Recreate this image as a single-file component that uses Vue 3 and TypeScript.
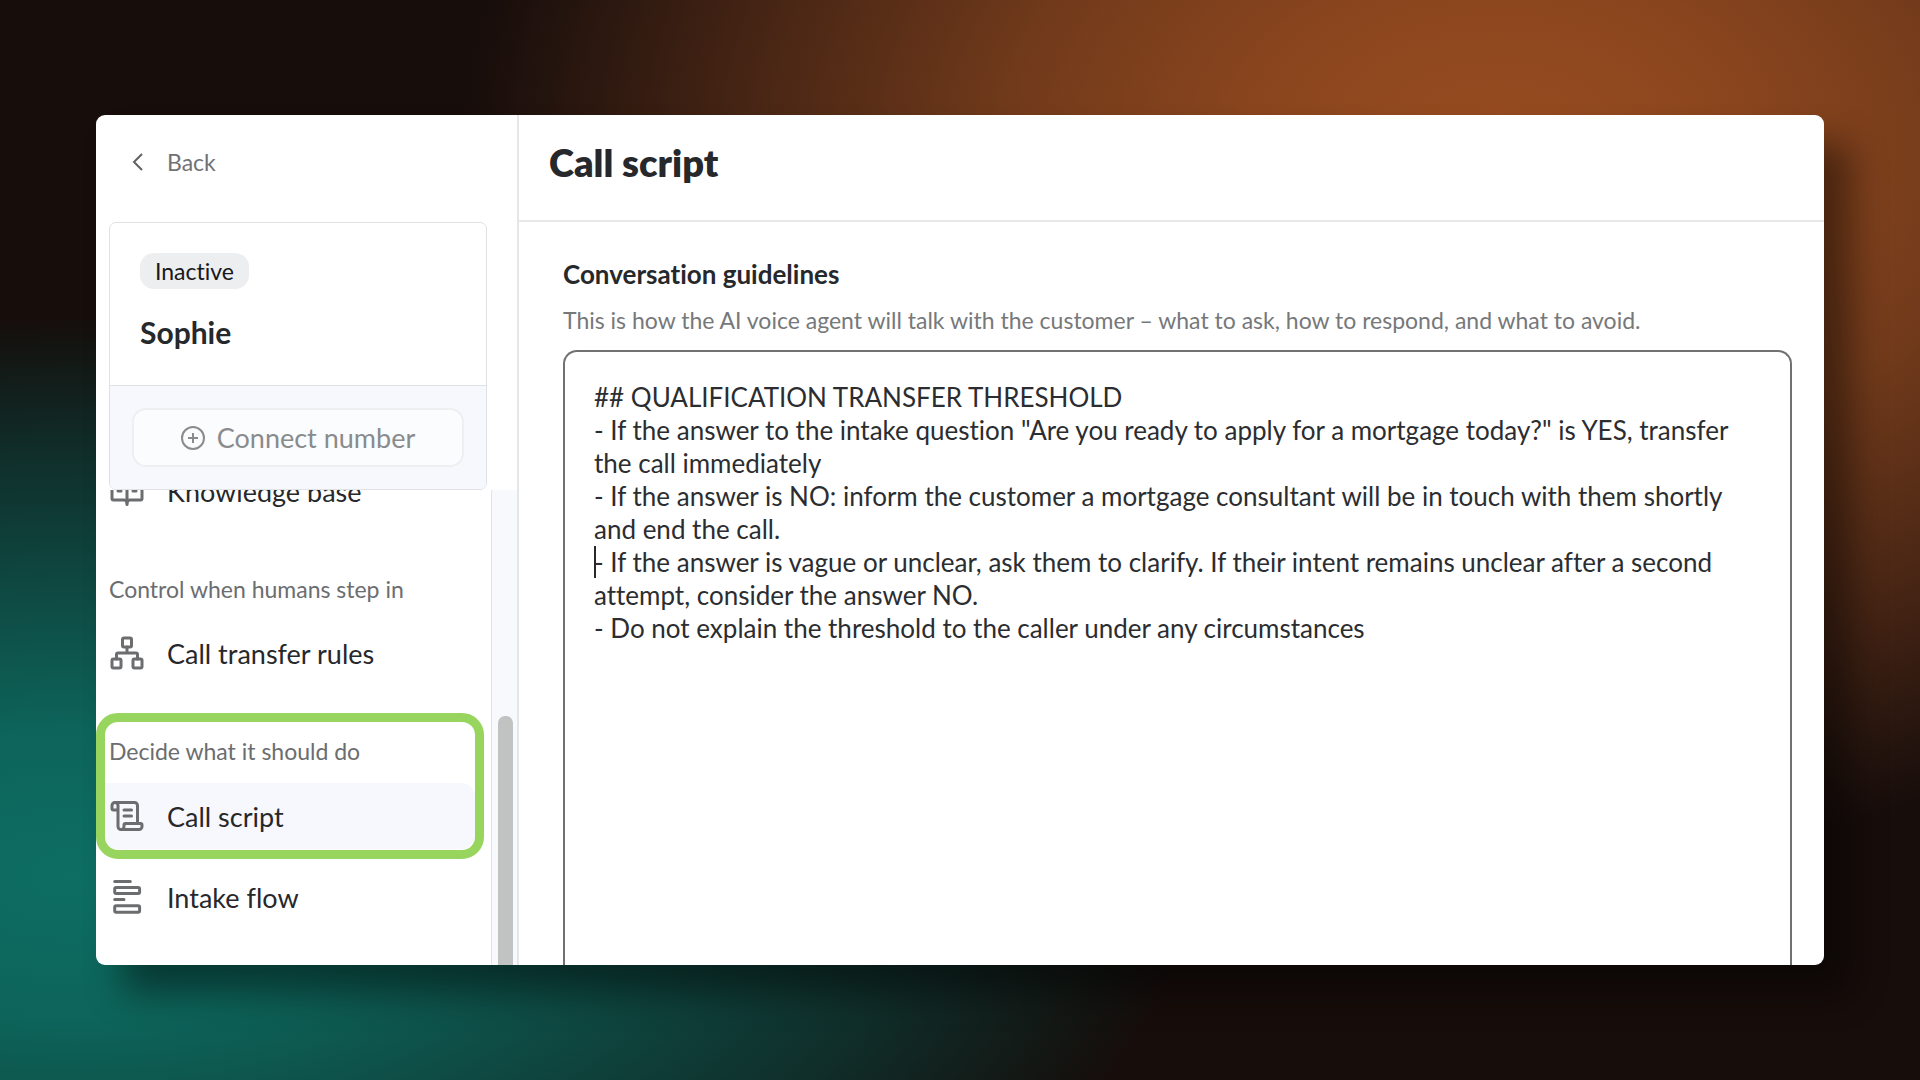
<script setup lang="ts">
import { ref } from 'vue'

type IconName = 'book' | 'network' | 'scroll' | 'flow'

interface NavItem {
  label: string
  icon: IconName
}

const icons: Record<IconName, string[]> = {
  book: [
    'M12 21V7',
    'M3 18a1 1 0 0 1-1-1V4a1 1 0 0 1 1-1h5a4 4 0 0 1 4 4 4 4 0 0 1 4-4h5a1 1 0 0 1 1 1v13a1 1 0 0 1-1 1h-7a2 2 0 0 0-2 2 2 2 0 0 0-2-2z',
    'M16 12h2M16 8h2M6 12h2M6 8h2',
  ],
  network: [
    'M17 16h4a1 1 0 0 1 1 1v4a1 1 0 0 1-1 1h-4a1 1 0 0 1-1-1v-4a1 1 0 0 1 1-1z',
    'M3 16h4a1 1 0 0 1 1 1v4a1 1 0 0 1-1 1H3a1 1 0 0 1-1-1v-4a1 1 0 0 1 1-1z',
    'M10 2h4a1 1 0 0 1 1 1v4a1 1 0 0 1-1 1h-4a1 1 0 0 1-1-1V3a1 1 0 0 1 1-1z',
    'M5 16v-3a1 1 0 0 1 1-1h12a1 1 0 0 1 1 1v3M12 12V8',
  ],
  scroll: [
    'M15 12h-5M15 8h-5',
    'M19 17V5a2 2 0 0 0-2-2H4',
    'M8 21h12a2 2 0 0 0 2-2v-1a1 1 0 0 0-1-1H11a1 1 0 0 0-1 1v1a2 2 0 1 1-4 0V5a2 2 0 1 0-4 0v2a1 1 0 0 0 1 1h3',
  ],
  flow: [
    'M3.8 1.6h10.4M3.8 13.7H10',
    'M4.8 5.7h14.6a1 1 0 0 1 1 1v1.9a1 1 0 0 1-1 1H4.8a1 1 0 0 1-1-1V6.7a1 1 0 0 1 1-1z',
    'M4.8 17.9h14.6a1 1 0 0 1 1 1v2.3a1 1 0 0 1-1 1H4.8a1 1 0 0 1-1-1v-2.3a1 1 0 0 1 1-1z',
  ],
}

const knowledge: NavItem = { label: 'Knowledge base', icon: 'book' }
const transfer: NavItem = { label: 'Call transfer rules', icon: 'network' }
const callScript: NavItem = { label: 'Call script', icon: 'scroll' }
const intake: NavItem = { label: 'Intake flow', icon: 'flow' }

const script = ref(
  [
    '## QUALIFICATION TRANSFER THRESHOLD',
    '- If the answer to the intake question "Are you ready to apply for a mortgage today?" is YES, transfer the call immediately',
    '- If the answer is NO: inform the customer a mortgage consultant will be in touch with them shortly and end the call.',
    '- If the answer is vague or unclear, ask them to clarify. If their intent remains unclear after a second attempt, consider the answer NO.',
    '- Do not explain the threshold to the caller under any circumstances',
  ].join('\n'),
)
</script>

<template>
  <div class="stage">
    <div class="window">
      <aside class="sidebar">
        <div class="sidebar-top">
          <button type="button" class="back">
            <svg class="chevron" viewBox="0 0 12 18" aria-hidden="true"><path d="M10 1 2 9l8 8" /></svg>
            <span>Back</span>
          </button>
        </div>

        <section class="agent">
          <div class="agent-info">
            <span class="badge">Inactive</span>
            <h2 class="agent-name">Sophie</h2>
          </div>
          <div class="agent-action">
            <button type="button" class="connect" disabled>
              <svg class="plus" viewBox="0 0 24 24" aria-hidden="true">
                <circle cx="12" cy="12" r="11" />
                <path d="M12 7v10M7 12h10" />
              </svg>
              <span>Connect number</span>
            </button>
          </div>
        </section>

        <div class="scroller">
          <nav class="nav" aria-label="Agent settings">
            <div class="group">
              <a href="#knowledge" class="item">
                <svg class="icon" viewBox="0 0 24 24" aria-hidden="true"><path v-for="d in icons[knowledge.icon]" :key="d" :d="d" /></svg>
                <span>{{ knowledge.label }}</span>
              </a>
            </div>
            <div class="group">
              <h3 class="group-title">Control when humans step in</h3>
              <a href="#transfer" class="item">
                <svg class="icon" viewBox="0 0 24 24" aria-hidden="true"><path v-for="d in icons[transfer.icon]" :key="d" :d="d" /></svg>
                <span>{{ transfer.label }}</span>
              </a>
            </div>
            <div class="group">
              <div class="spotlight">
                <h3 class="group-title">Decide what it should do</h3>
                <a href="#script" class="item active" aria-current="page">
                  <svg class="icon" viewBox="0 0 24 24" aria-hidden="true"><path v-for="d in icons[callScript.icon]" :key="d" :d="d" /></svg>
                  <span>{{ callScript.label }}</span>
                </a>
              </div>
              <a href="#intake" class="item">
                <svg class="icon" viewBox="0 0 24 24" aria-hidden="true"><path v-for="d in icons[intake.icon]" :key="d" :d="d" /></svg>
                <span>{{ intake.label }}</span>
              </a>
            </div>
          </nav>
          <div class="track" aria-hidden="true"><div class="thumb"></div></div>
        </div>
      </aside>

      <main class="main">
        <header class="header">
          <h1 class="title">Call script</h1>
        </header>
        <div class="content">
          <label class="field-label" for="guidelines">Conversation guidelines</label>
          <p id="guidelines-help" class="help">
            This is how the AI voice agent will talk with the customer – what to ask, how to respond, and what to avoid.
          </p>
          <div class="editor">
            <textarea id="guidelines" v-model="script" class="text" spellcheck="false" aria-describedby="guidelines-help"></textarea>
            <span class="caret" aria-hidden="true"></span>
          </div>
        </div>
      </main>
    </div>
  </div>
</template>

<style>
body {
  margin: 0;
}
</style>

<style scoped>
.stage,
.stage * {
  box-sizing: border-box;
}

.stage {
  display: flex;
  height: 100vh;
  padding: 115px 5%;
  font-family: Lato, "Liberation Sans", sans-serif;
  font-variant-ligatures: none;
  color: #26282b;
  background:
    radial-gradient(ellipse 54% 66% at 78% 14%, #984c20 0%, #8c461e 22%, #733b1b 46%, #452414 74%, #24140e 92%, transparent 100%),
    radial-gradient(ellipse 58% 52% at 4% 81%, #0d6e63 0%, #0d645a 26%, #0e4a43 50%, #102d29 76%, #14120f 96%, transparent 100%),
    #170d0b;
}

.window {
  display: flex;
  flex: 1;
  min-width: 0;
  overflow: hidden;
  border-radius: 9px;
  background: #fff;
  box-shadow: 26px 28px 36px rgba(0, 0, 0, 0.45);
}

h1,
h2,
h3,
p {
  margin: 0;
}

button {
  font-family: inherit;
  font-variant-ligatures: inherit;
}

.sidebar {
  display: flex;
  flex: 0 0 423px;
  flex-direction: column;
  border-right: 2px solid #e4e6e8;
}

.sidebar-top {
  flex: none;
  height: 107px;
  padding: 31px 36px;
}

.back {
  display: flex;
  align-items: center;
  gap: 23px;
  padding: 0;
  border: 0;
  background: none;
  color: #707274;
  font-size: 23px;
  line-height: 32px;
}

.chevron {
  width: 12px;
  height: 18px;
  fill: none;
  stroke: #5f6163;
  stroke-width: 2;
}

.agent {
  flex: none;
  margin: 0 30px 0 13px;
  overflow: hidden;
  border: 1px solid #dfe1e5;
  border-radius: 7px;
}

.agent-info {
  display: flex;
  flex-direction: column;
  align-items: flex-start;
  gap: 24px;
  height: 162px;
  padding: 30px;
}

.badge {
  padding: 0 15px;
  border-radius: 14px;
  background: #edeef0;
  color: #16181a;
  font-size: 23px;
  line-height: 36px;
}

.agent-name {
  font-size: 30px;
  font-weight: 700;
  line-height: 38px;
}

.agent-action {
  padding: 22px;
  border-top: 1px solid #dfe1e5;
  background: #f7f8fd;
}

.connect {
  display: flex;
  align-items: center;
  justify-content: center;
  gap: 12px;
  width: 100%;
  padding: 0;
  border: 2px solid #eeeff1;
  border-radius: 14px;
  background: #fbfcfe;
  color: #898b8d;
  font-size: 27px;
  line-height: 55px;
}

.plus {
  width: 24px;
  height: 24px;
  overflow: visible;
  fill: none;
  stroke: #898b8d;
  stroke-width: 2;
}

.scroller {
  display: flex;
  flex: 1;
  min-height: 0;
}

.nav {
  display: flex;
  flex: 1;
  flex-direction: column;
  justify-content: flex-end;
  gap: 49px;
  padding: 0 16px 35px 0;
  overflow: hidden;
}

.group {
  display: flex;
  flex: none;
  flex-direction: column;
  gap: 15px;
}

.group-title {
  padding-left: 13px;
  color: #6b6d6f;
  font-size: 23px;
  font-weight: 400;
  line-height: 32px;
}

.spotlight {
  position: relative;
  display: flex;
  flex-direction: column;
  gap: 16px;
}

.spotlight::after {
  position: absolute;
  inset: -22px -9px -10px 0;
  border: 9px solid #97d55f;
  border-radius: 22px;
  content: "";
}

.item {
  display: flex;
  align-items: center;
  gap: 22px;
  height: 66px;
  padding-left: 13px;
  border-radius: 0 14px 14px 0;
  color: #26282b;
  font-size: 27px;
  text-decoration: none;
}

.item.active {
  background: #f7f8fd;
}

.icon {
  width: 36px;
  height: 36px;
  fill: none;
  stroke: #6b6d6f;
  stroke-linecap: round;
  stroke-linejoin: round;
  stroke-width: 2;
}

.track {
  flex: 0 0 26px;
  padding: 226px 4px 0 6px;
  border-left: 1px solid #e1e3e8;
  background: #f8f9fc;
}

.thumb {
  height: 100%;
  border-radius: 7px 7px 0 0;
  background: #c1c2c2;
}

.main {
  display: flex;
  flex: 1;
  flex-direction: column;
  min-width: 0;
}

.header {
  flex: none;
  height: 107px;
  padding: 25px 30px;
  border-bottom: 2px solid #e7e8ea;
}

.title {
  font-size: 38px;
  font-weight: 800;
  line-height: 44px;
}

.content {
  display: flex;
  flex: 1;
  flex-direction: column;
  min-height: 0;
  padding: 36px 32px 0 44px;
}

.field-label {
  font-size: 26px;
  font-weight: 700;
  line-height: 32px;
}

.help {
  margin: 15px 0;
  color: #76787a;
  font-size: 23px;
  line-height: 30px;
}

.editor {
  position: relative;
  display: flex;
  flex: 1;
  min-height: 0;
}

.text {
  flex: 1;
  padding: 29px 28px 0 29px;
  overflow: hidden;
  border: 2px solid #6f7173;
  border-bottom: 0;
  border-radius: 14px 14px 0 0;
  outline: 0;
  resize: none;
  background: #fff;
  color: #2b2d30;
  font-family: inherit;
  font-size: 26px;
  font-variant-ligatures: inherit;
  line-height: 33px;
}

.caret {
  position: absolute;
  top: 196px;
  left: 31px;
  width: 2px;
  height: 32px;
  background: #26282b;
}
</style>
